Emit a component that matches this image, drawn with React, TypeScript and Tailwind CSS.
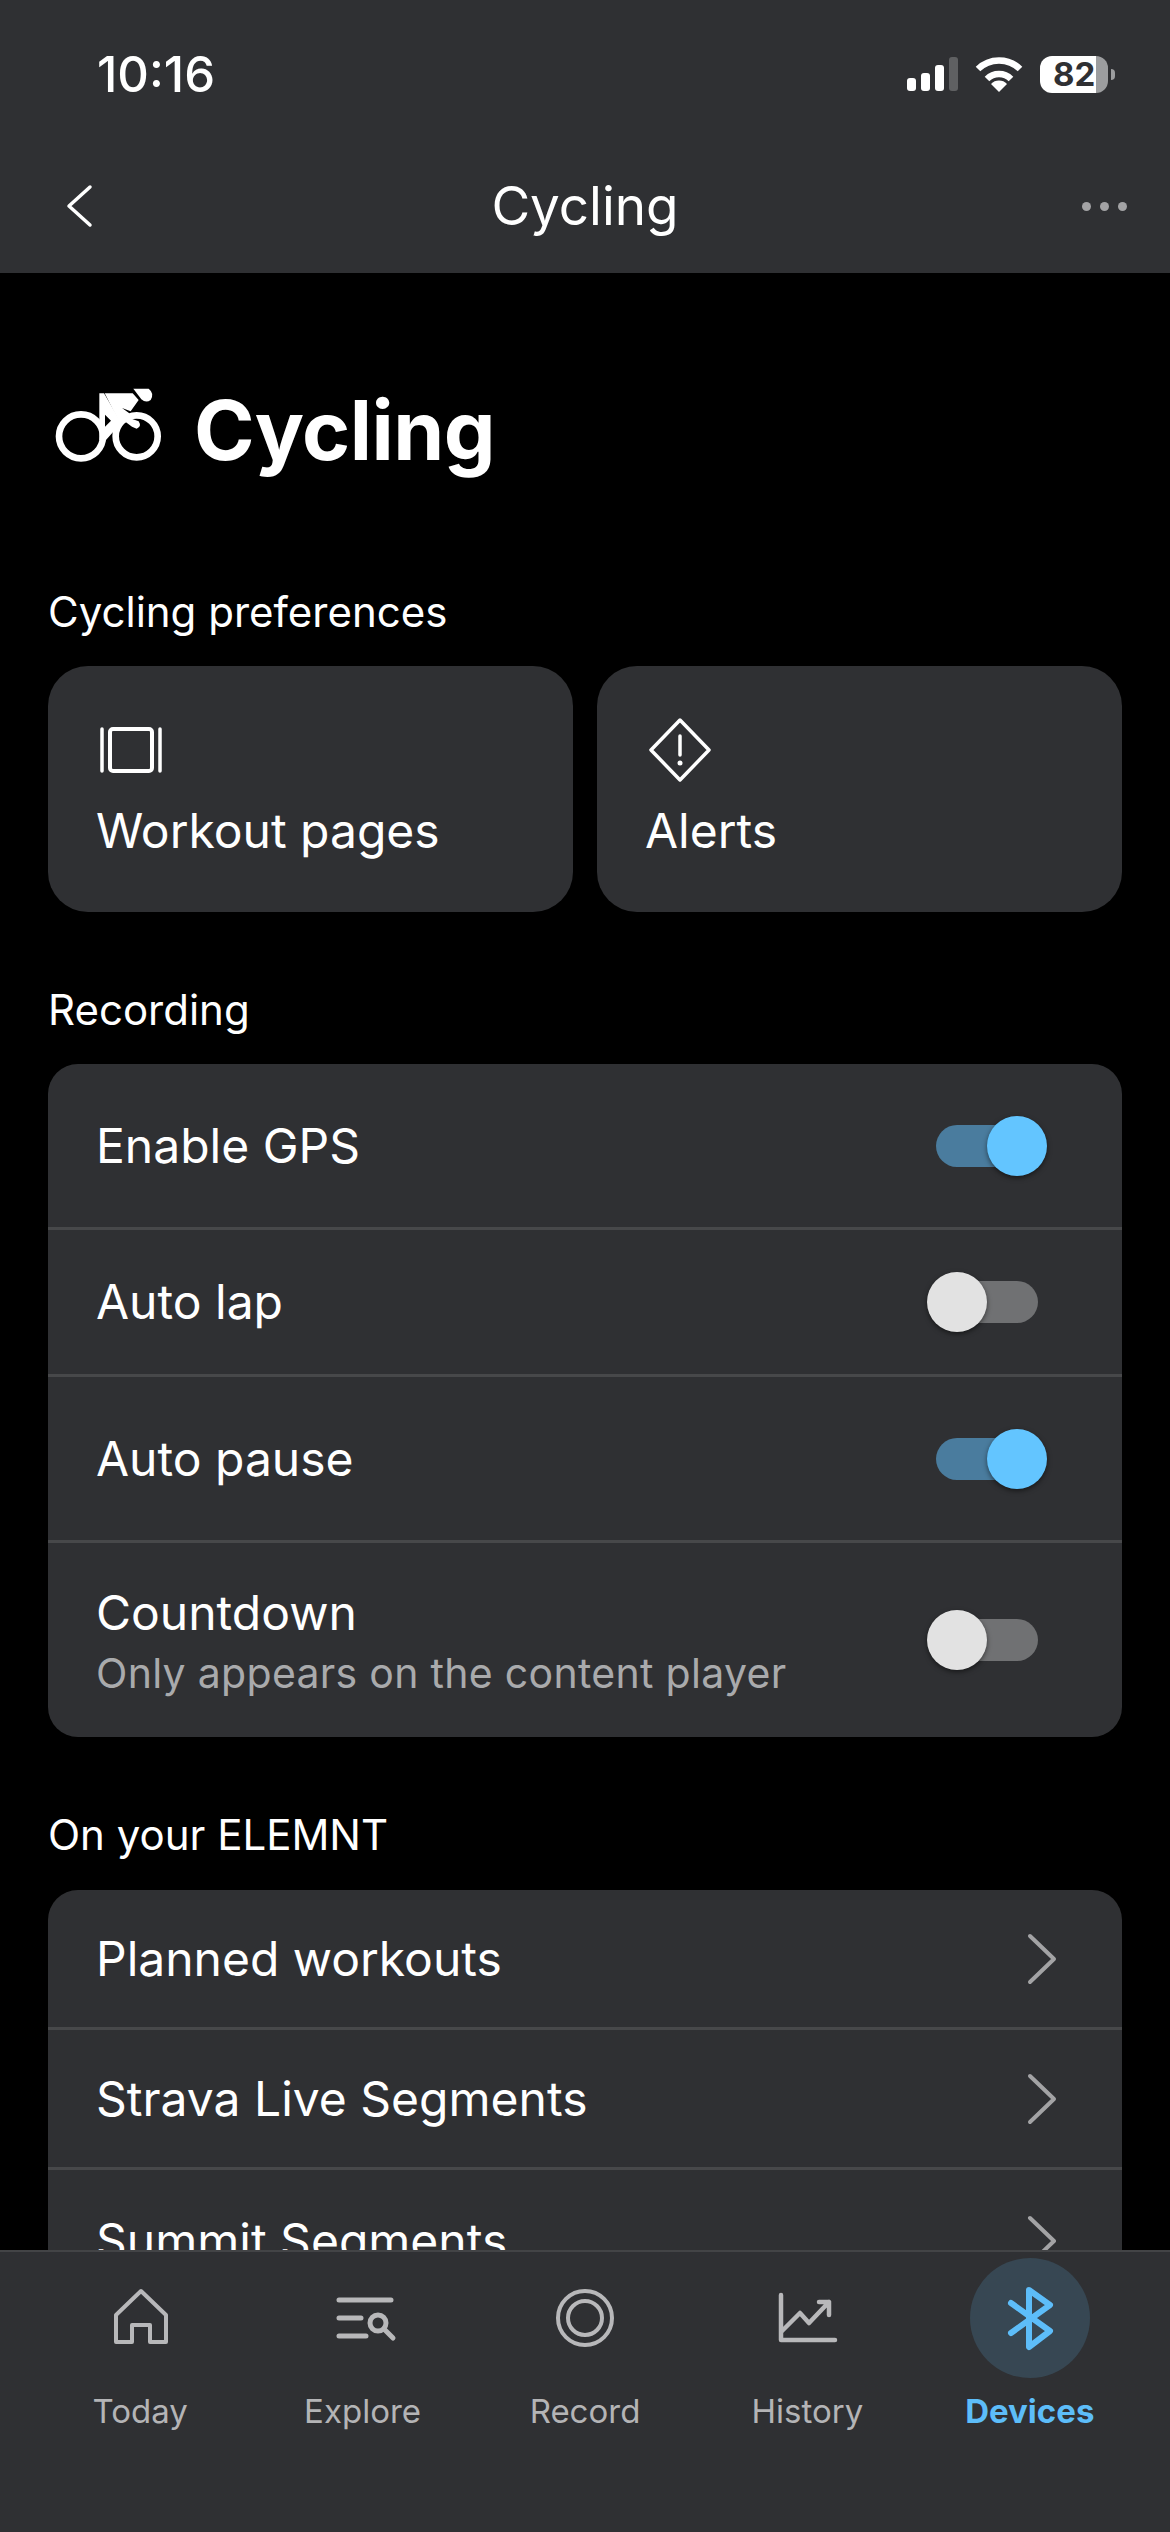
import React from 'react';

const Toggle: React.FC<{ on?: boolean }> = ({ on }) => (
  <div className={`relative h-[42px] w-[102px] rounded-full ${on ? 'bg-[#4a7c9e]' : 'bg-[#707173]'}`}>
    <div
      className={`absolute top-[-9px] h-[60px] w-[60px] rounded-full shadow-[0_2px_5px_rgba(0,0,0,0.5)] ${
        on ? 'left-[51px] bg-[#63c5ff]' : 'left-[-9px] bg-[#e2e2e2]'
      }`}
    />
  </div>
);

const Chevron = () => (
  <svg width="32" height="52" viewBox="0 0 32 52" fill="none" stroke="#a3a3a5" strokeWidth="4" strokeLinecap="round" strokeLinejoin="round">
    <path d="M4 3 L28 26 L4 49" />
  </svg>
);

const BikeIcon = () => (
  <svg width="120" height="90" viewBox="0 18 360 270" fill="white">
    <circle cx="93" cy="169" r="66" fill="none" stroke="white" strokeWidth="20" />
    <circle cx="260" cy="169" r="63" fill="none" stroke="white" strokeWidth="20" />
    <path d="M250 26 L296 26 Q314 40 302 60 Q288 70 274 58 Z" />
    <path d="M164 40 L248 40 L266 60 L242 94 L216 84 L238 100 L232 112 L266 124 Q276 140 260 146 L246 140 L222 122 L208 126 Z" />
    <path d="M148 40 L162 40 L210 122 L214 128 L168 180 L148 180 Z" />
    <path d="M165 104 L183 122 L165 140 Z" fill="black" />
  </svg>
);

const ListRow: React.FC<{ label: string; sub?: string; className: string; children: React.ReactNode }> = ({ label, sub, className, children }) => (
  <div className={`flex items-center justify-between pl-[48px] ${className}`}>
    <div>
      <div className="text-[48px] leading-[60px] text-white">{label}</div>
      {sub && <div className="mt-[5px] text-[41px] leading-[50px] tracking-[0.3px] text-[#a9aaac]">{sub}</div>}
    </div>
    {children}
  </div>
);

const tabs = [
  {
    label: 'Today',
    icon: <path d="M22 54 H6 V27 L31 3 L56 27 V54 H40 V37 H22 Z" strokeLinejoin="round" />,
  },
  {
    label: 'Explore',
    icon: (
      <g strokeLinecap="round" strokeWidth="5">
        <path d="M6 12 H58 M6 30 H28 M6 48 H33" />
        <circle cx="45" cy="35" r="8" />
        <path d="M51 41 L60 50" />
      </g>
    ),
  },
  {
    label: 'Record',
    icon: (
      <g>
        <circle cx="30" cy="30" r="27" />
        <circle cx="30" cy="30" r="17" />
      </g>
    ),
  },
  {
    label: 'History',
    icon: (
      <g strokeLinecap="round" strokeLinejoin="round" strokeWidth="4.5">
        <path d="M4 7 V52 H58" />
        <path d="M5 43 L23 25 L32 35 L52 14 M42 14 H52 V27" />
      </g>
    ),
  },
];

export default function App() {
  return (
    <div className="flex h-[2532px] w-[1170px] flex-col overflow-hidden bg-black font-['Inter',sans-serif] text-white">
      <header className="h-[273px] flex-none bg-[#2f3033] pt-[49px]">
        {/* status bar */}
        <div className="flex h-[50px] items-center justify-between pl-[97px] pr-[55px]">
          <span className="text-[49px] font-medium leading-none">10:16</span>
          <div className="flex items-center">
            <svg width="51" height="34" viewBox="0 0 51 34" className="mr-[17px]">
              <rect x="0" y="21" width="9" height="13" rx="3" fill="white" />
              <rect x="14" y="16" width="9" height="18" rx="3" fill="white" />
              <rect x="28" y="8" width="9" height="26" rx="3" fill="white" />
              <rect x="42" y="0" width="9" height="34" rx="3" fill="#5f6062" />
            </svg>
            <svg width="48" height="36" viewBox="0 0 48 36" fill="none" stroke="white" strokeWidth="6.5" className="mr-[17px]">
              <path d="M3 13 A30 30 0 0 1 45 13" />
              <path d="M12 23 A17 17 0 0 1 36 23" />
              <path d="M24 36 L16 28 A11 11 0 0 1 32 28 Z" fill="white" stroke="none" />
            </svg>
            <div className="flex h-[37px] w-[68px] rounded-[12px] bg-[linear-gradient(90deg,#ffffff_56px,#9c9d9f_56px)] pl-[13px] text-[33px] font-bold leading-[37px] text-[#2f3033]">
              82
            </div>
            <div className="ml-[3px] h-[11px] w-[4px] rounded-r-full bg-[#9c9d9f]" />
          </div>
        </div>
        {/* nav */}
        <div className="mt-[44px] grid h-[126px] grid-cols-[1fr_auto_1fr] items-center px-[43px]">
          <svg width="28" height="44" viewBox="0 0 28 44" fill="none" stroke="white" strokeWidth="3.5" strokeLinecap="round" strokeLinejoin="round" className="ml-[22px]">
            <path d="M25 3 L4 22 L25 41" />
          </svg>
          <div className="text-[53px] leading-none">Cycling</div>
          <div className="flex justify-end gap-[9px]">
            <span className="h-[9px] w-[9px] rounded-full bg-[#a3a3a5]" />
            <span className="h-[9px] w-[9px] rounded-full bg-[#a3a3a5]" />
            <span className="h-[9px] w-[9px] rounded-full bg-[#a3a3a5]" />
          </div>
        </div>
      </header>

      <main className="min-h-0 flex-1 overflow-hidden px-[48px]">
        <div className="ml-[2px] mt-[113px] flex h-[90px] items-center gap-[24px]">
          <BikeIcon />
          <h1 className="text-[82px] font-bold leading-none tracking-[-0.5px]">Cycling</h1>
        </div>

        <div className="mt-[111px] h-[50px] text-[42px] leading-[50px]">Cycling preferences</div>
        <div className="mt-[29px] grid grid-cols-2 gap-[24px]">
          <div className="h-[246px] rounded-[40px] bg-[#2f3033] pl-[48px] pt-[52px]">
            <div className="flex h-[64px] items-center">
              <svg width="64" height="46" viewBox="0 0 64 46" fill="none" stroke="white" strokeWidth="3.5" strokeLinecap="round" className="ml-[3px]">
                <path d="M3 2 V44 M61 2 V44" />
                <rect x="11" y="2" width="42" height="42" rx="3" strokeWidth="4" />
              </svg>
            </div>
            <div className="mt-[19px] text-[48px] leading-[60px]">Workout pages</div>
          </div>
          <div className="h-[246px] rounded-[40px] bg-[#2f3033] pl-[48px] pt-[52px]">
            <svg width="64" height="64" viewBox="0 0 64 64" fill="none" stroke="white" strokeWidth="3.5" strokeLinecap="round" strokeLinejoin="round" className="ml-[3px]">
              <path d="M32 2 L61 32 L32 62 L3 32 Z" />
              <path d="M32 18 V37" />
              <circle cx="32" cy="45" r="2.5" fill="white" stroke="none" />
            </svg>
            <div className="mt-[19px] text-[48px] leading-[60px]">Alerts</div>
          </div>
        </div>

        <div className="mt-[73px] h-[50px] text-[42px] leading-[50px]">Recording</div>
        <div className="mt-[29px] divide-y-[3px] divide-[#47484a] overflow-hidden rounded-[30px] bg-[#2f3033]">
          <ListRow label="Enable GPS" className="h-[166px] pr-[84px]"><Toggle on /></ListRow>
          <ListRow label="Auto lap" className="h-[147px] pr-[84px]"><Toggle /></ListRow>
          <ListRow label="Auto pause" className="h-[166px] pr-[84px]"><Toggle on /></ListRow>
          <ListRow label="Countdown" sub="Only appears on the content player" className="h-[194px] pr-[84px]"><Toggle /></ListRow>
        </div>

        <div className="mt-[73px] h-[50px] text-[42px] leading-[50px]">On your ELEMNT</div>
        <div className="mt-[30px] divide-y-[3px] divide-[#47484a] rounded-t-[30px] bg-[#2f3033]">
          <ListRow label="Planned workouts" className="h-[140px] pr-[64px]"><Chevron /></ListRow>
          <ListRow label="Strava Live Segments" className="h-[140px] pr-[64px]"><Chevron /></ListRow>
          <ListRow label="Summit Segments" className="h-[142px] pr-[64px]"><Chevron /></ListRow>
        </div>
      </main>

      <nav className="z-10 grid h-[282px] flex-none grid-cols-5 border-t-2 border-[#434446] bg-[#2f3033] px-[29px] pt-[6px]">
        {tabs.map((tab) => (
          <div key={tab.label} className="flex flex-col items-center">
            <div className="flex h-[120px] w-[120px] items-center justify-center">
              <svg width="60" height="60" viewBox="0 0 60 60" fill="none" stroke="#b8b8ba" strokeWidth="4" className="overflow-visible">
                {tab.icon}
              </svg>
            </div>
            <div className="mt-[13px] text-[33px] leading-[40px] text-[#b4b4b6]">{tab.label}</div>
          </div>
        ))}
        <div className="flex flex-col items-center">
          <div className="flex h-[120px] w-[120px] items-center justify-center rounded-full bg-[#374753]">
            <svg width="60" height="60" viewBox="0 0 60 60" fill="none" stroke="#5dbdf9" strokeWidth="6" strokeLinecap="round" strokeLinejoin="round" className="overflow-visible">
              <path d="M11 15 L50 43 L29 59 V2 L50 17 L11 45" />
            </svg>
          </div>
          <div className="mt-[13px] text-[33px] font-bold leading-[40px] text-[#5dbdf9]">Devices</div>
        </div>
      </nav>
    </div>
  );
}
